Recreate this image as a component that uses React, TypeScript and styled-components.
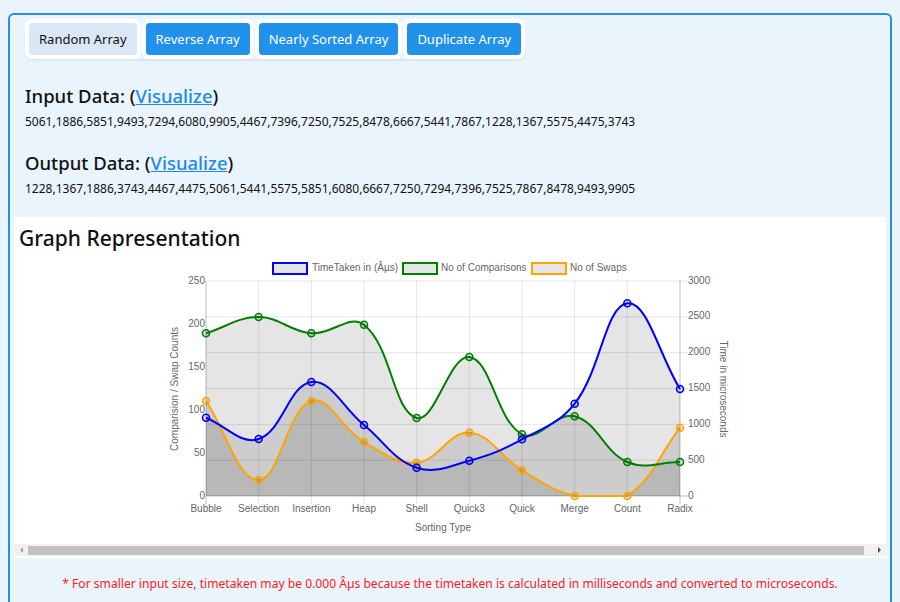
import React from "react";
import styled, { createGlobalStyle } from "styled-components";

const GlobalStyle = createGlobalStyle`
  html, body { margin: 0; padding: 0; background: #eaf4fd; }
  body {
    font-family: "Noto Sans", "Open Sans", sans-serif;
    color: #111;
    overflow: hidden;
  }
`;

const Page = styled.div`
  padding: 13px 8px 0 8px;
`;

const Container = styled.div`
  border: 2px solid #2b8de3;
  border-bottom: none;
  border-radius: 6px 6px 0 0;
  padding: 4px 4px 0;
  height: 620px;
`;

const TopSection = styled.div`
  padding-left: 11px;
`;

const ButtonGroup = styled.div`
  display: inline-flex;
  gap: 1px;
  border-radius: 7px;
  box-shadow: 0 2px 2px rgba(0, 0, 0, 0.06);
`;

const ArrayButton = styled.button<{ $active?: boolean }>`
  height: 40px;
  box-sizing: border-box;
  border: 4px solid #fff;
  border-radius: 7px;
  background: ${(p) => (p.$active ? "#dae8f5" : "#2191eb")};
  background-clip: padding-box;
  color: ${(p) => (p.$active ? "#111" : "#fff")};
  font-family: "Noto Sans", sans-serif;
  font-size: 13px;
  padding: 0 10px;
  cursor: pointer;
`;

const DataHeading = styled.h2<{ $top: number }>`
  margin: ${(p) => p.$top}px 0 0;
  font-size: 18.5px;
  font-weight: 500;
  line-height: 26px;
`;

const VisLink = styled.a`
  color: #1f8ae6;
  text-decoration: underline;
`;

const DataLine = styled.div`
  margin-top: 4px;
  font-size: 12px;
  line-height: 18px;
`;

const GraphSection = styled.div`
  margin-top: 19px;
  background: #fff;
  padding: 8px 0 2px;
`;

const GraphTitle = styled.h2`
  margin: 0 0 1px 5px;
  font-size: 21px;
  font-weight: 500;
  line-height: 26px;
`;

const ChartSvg = styled.svg`
  display: block;
  font-family: "Liberation Sans", Arial, sans-serif;
`;

const ScrollTrack = styled.div`
  margin-top: 1px;
  height: 12px;
  background: #f1f1f1;
  display: flex;
  align-items: stretch;
`;

const ScrollArrow = styled.div<{ $dir: "left" | "right" }>`
  width: 14px;
  display: flex;
  align-items: center;
  justify-content: center;
  &::before {
    content: "";
    width: 0;
    height: 0;
    border-top: 3px solid transparent;
    border-bottom: 3px solid transparent;
    ${(p) =>
      p.$dir === "left"
        ? "border-right: 3px solid #a3a3a3;"
        : "border-left: 3px solid #505050;"}
  }
`;

const ScrollThumb = styled.div`
  flex: 1;
  margin: 2px 8px 1px 0;
  background: #c1c1c1;
`;

const Note = styled.p`
  margin: 17px 0 0;
  text-align: center;
  color: #ff1a1a;
  font-size: 12.1px;
  line-height: 18px;
`;

const CATS = ["Bubble", "Selection", "Insertion", "Heap", "Shell", "Quick3", "Quick", "Merge", "Count", "Radix"];
const OX = 14;
const OY = 251;
const L = 206 - OX;
const R = 680 - OX;
const T = 280 - OY;
const B = 495 - OY;
const xs = CATS.map((_, i) => L + (i * (R - L)) / 9);

type DS = { label: string; color: string; ys: number[] };
const DATASETS: DS[] = [
  { label: "TimeTaken in (Âµs)", color: "#0000ff", ys: [416.7, 438, 381, 424, 466.7, 459.7, 438.3, 402.7, 302.3, 388] },
  { label: "No of Comparisons", color: "#008000", ys: [332.3, 316, 332.3, 323.7, 417, 356, 433.3, 415.3, 461, 461] },
  { label: "No of Swaps", color: "#ffa500", ys: [400, 479, 400, 441, 461.7, 431.7, 469.3, 495, 495, 426.7] },
];

type Pt = { x: number; y: number };
const cap = (v: number, lo: number, hi: number) => Math.max(Math.min(v, hi), lo);

function buildLine(ys: number[]): string {
  const pts: Pt[] = ys.map((y, i) => ({ x: xs[i], y: y - OY }));
  const cps = pts.map((cur, i) => {
    const prev = i > 0 ? pts[i - 1] : cur;
    const next = i < pts.length - 1 ? pts[i + 1] : cur;
    const d01 = Math.hypot(cur.x - prev.x, cur.y - prev.y);
    const d12 = Math.hypot(next.x - cur.x, next.y - cur.y);
    let s01 = d01 / (d01 + d12);
    let s12 = d12 / (d01 + d12);
    if (isNaN(s01)) s01 = 0;
    if (isNaN(s12)) s12 = 0;
    const fa = 0.4 * s01;
    const fb = 0.4 * s12;
    return {
      p: { x: cap(cur.x - fa * (next.x - prev.x), L, R), y: cap(cur.y - fa * (next.y - prev.y), T, B) },
      n: { x: cap(cur.x + fb * (next.x - prev.x), L, R), y: cap(cur.y + fb * (next.y - prev.y), T, B) },
    };
  });
  let d = `M${pts[0].x},${pts[0].y}`;
  for (let i = 1; i < pts.length; i++) {
    const a = cps[i - 1].n;
    const b = cps[i].p;
    d += ` C${a.x},${a.y} ${b.x},${b.y} ${pts[i].x},${pts[i].y}`;
  }
  return d;
}

const LEGEND = [
  { box: 259, text: 298 },
  { box: 389, text: 427 },
  { box: 518, text: 556 },
];

const leftTicks = [250, 200, 150, 100, 50, 0];
const rightTicks = [3000, 2500, 2000, 1500, 1000, 500, 0];

function Chart() {
  const drawOrder = [...DATASETS].reverse();
  return (
    <ChartSvg width={872} height={291} viewBox="0 0 872 291">
      {DATASETS.map((ds, i) => (
        <g key={ds.label}>
          <rect x={LEGEND[i].box} y={11} width={34} height={11} fill="rgba(0,0,0,0.1)" stroke={ds.color} strokeWidth={2} />
          <text x={LEGEND[i].text} y={16.5} fontSize={10} fill="#666" dominantBaseline="middle">
            {ds.label}
          </text>
        </g>
      ))}
      {rightTicks.map((v, i) => {
        const y = T + (i * (B - T)) / 6;
        return (
          <g key={v}>
            <line x1={L} x2={R + 8} y1={y} y2={y} stroke={i === 6 ? "rgba(0,0,0,0.25)" : "rgba(0,0,0,0.1)"} strokeWidth={1} />
            <text x={R + 8} y={y} fontSize={10} fill="#666" dominantBaseline="middle">
              {v}
            </text>
          </g>
        );
      })}
      {xs.map((x, i) => (
        <line
          key={i}
          x1={x}
          x2={x}
          y1={T}
          y2={B + 8}
          stroke={i === 0 || i === 9 ? "rgba(0,0,0,0.25)" : "rgba(0,0,0,0.1)"}
          strokeWidth={1}
        />
      ))}
      {leftTicks.map((v, i) => {
        const y = T + (i * (B - T)) / 5;
        return (
          <text key={v} x={L - 1} y={y} fontSize={10} fill="#666" textAnchor="end" dominantBaseline="middle">
            {v}
          </text>
        );
      })}
      {CATS.map((c, i) => (
        <text key={c} x={xs[i]} y={257} fontSize={10} fill="#666" textAnchor="middle" dominantBaseline="middle">
          {c}
        </text>
      ))}
      <text x={429} y={276} fontSize={10} fill="#666" textAnchor="middle" dominantBaseline="middle">
        Sorting Type
      </text>
      <text
        x={0}
        y={0}
        fontSize={10}
        fill="#666"
        textAnchor="middle"
        dominantBaseline="middle"
        transform={`translate(161 ${388 - OY}) rotate(-90)`}
      >
        Comparision / Swap Counts
      </text>
      <text
        x={0}
        y={0}
        fontSize={10}
        fill="#666"
        textAnchor="middle"
        dominantBaseline="middle"
        transform={`translate(709 ${388 - OY}) rotate(90)`}
      >
        Time in microseconds
      </text>
      {drawOrder.map((ds) => (
        <path
          key={`fill-${ds.label}`}
          d={`${buildLine(ds.ys)} L${xs[9]},${B} L${xs[0]},${B} Z`}
          fill="rgba(0,0,0,0.1)"
          stroke="none"
        />
      ))}
      {drawOrder.map((ds) => (
        <g key={ds.label}>
          <path d={buildLine(ds.ys)} fill="none" stroke={ds.color} strokeWidth={2} />
          {ds.ys.map((y, i) => (
            <circle key={i} cx={xs[i]} cy={y - OY} r={3.5} fill="rgba(0,0,0,0.1)" stroke={ds.color} strokeWidth={1.6} />
          ))}
        </g>
      ))}
    </ChartSvg>
  );
}

const INPUT = "5061,1886,5851,9493,7294,6080,9905,4467,7396,7250,7525,8478,6667,5441,7867,1228,1367,5575,4475,3743";
const OUTPUT = "1228,1367,1886,3743,4467,4475,5061,5441,5575,5851,6080,6667,7250,7294,7396,7525,7867,8478,9493,9905";

export default function App() {
  return (
    <>
      <GlobalStyle />
      <Page>
        <Container>
          <TopSection>
            <ButtonGroup>
              <ArrayButton $active>Random Array</ArrayButton>
              <ArrayButton>Reverse Array</ArrayButton>
              <ArrayButton>Nearly Sorted Array</ArrayButton>
              <ArrayButton>Duplicate Array</ArrayButton>
            </ButtonGroup>
            <DataHeading $top={24}>
              Input Data: (<VisLink href="#">Visualize</VisLink>)
            </DataHeading>
            <DataLine>{INPUT}</DataLine>
            <DataHeading $top={19}>
              Output Data: (<VisLink href="#">Visualize</VisLink>)
            </DataHeading>
            <DataLine>{OUTPUT}</DataLine>
          </TopSection>
          <GraphSection>
            <GraphTitle>Graph Representation</GraphTitle>
            <Chart />
            <ScrollTrack>
              <ScrollArrow $dir="left" />
              <ScrollThumb />
              <ScrollArrow $dir="right" />
            </ScrollTrack>
          </GraphSection>
          <Note>
            * For smaller input size, timetaken may be 0.000 Âµs because the timetaken is calculated in milliseconds and
            converted to microseconds.
          </Note>
        </Container>
      </Page>
    </>
  );
}
